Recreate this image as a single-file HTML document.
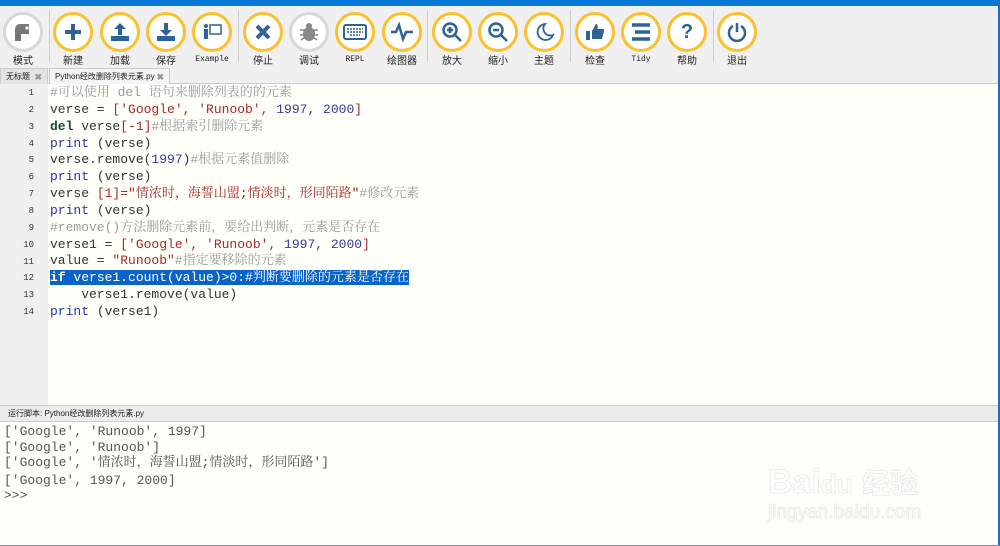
<!DOCTYPE html>
<html><head><meta charset="utf-8"><style>
*{margin:0;padding:0;box-sizing:border-box}
body{width:1000px;height:546px;overflow:hidden;background:#f0f0f0;position:relative;font-family:"Liberation Sans","Noto Sans CJK SC",sans-serif}
.top{position:absolute;left:0;top:0;width:1000px;height:6px;background:#0a78d7}
.rb{position:absolute;right:0;top:0;width:2px;height:546px;background:#1a6fc4}
.btn{position:absolute;top:12px;width:40px;height:40px;border-radius:50%;border:3px solid #fbc02d;background:#fff;display:flex;align-items:center;justify-content:center}
.btn.g{border-color:#d8d8d8}
.lbl{position:absolute;top:52px;width:60px;text-align:center;font-size:10px;color:#222;font-family:"Liberation Sans","Noto Sans CJK SC",sans-serif}
.lbl.m{font-family:"Liberation Mono",monospace;font-size:8px;top:55px}
.sep{position:absolute;top:10px;width:1px;height:52px;background:#ccc}
.tabs{position:absolute;top:68px;left:0;width:998px;height:16px;border-bottom:1px solid #ccc}
.tab{position:absolute;top:0;height:16px;font-size:8px;line-height:16px;padding-left:5px;border:1px solid #ccc;border-bottom:none;background:#e4e4e4;color:#222}
.tab b{color:#999;position:absolute;right:5px;font-size:9px}
.ed{position:absolute;top:84px;left:0;width:998px;height:321px;background:#fffffa}
.gut{position:absolute;top:84px;left:0;width:48px;height:321px;background:#f0f0f0}
.ln{position:absolute;left:0;width:34px;text-align:right;font-size:9px;color:#333;font-family:"Liberation Mono",monospace}
.code{position:absolute;left:50px;font-family:"Liberation Mono","Noto Serif CJK SC",monospace;font-size:13px;color:#333;white-space:pre}
.code div{height:16.85px;line-height:16.85px}
.k{color:#2838a8}.s{color:#a82a2a}.n{color:#3a3a9a}.c{color:#9a9a9a}.d{color:#1b4a3c;font-weight:bold}
.sel{background:#0a64c8;color:#fff}
.run{position:absolute;top:405px;left:0;width:998px;height:17px;background:#ececec;border-top:1px solid #ccc;border-bottom:1px solid #ccc;font-size:8px;line-height:15px;padding-left:8px;color:#222}
.out{position:absolute;top:422px;left:0;width:998px;height:123px;background:#fffffa}
.o{position:absolute;left:4px;font-family:"Liberation Mono","Noto Serif CJK SC",monospace;font-size:13px;color:#555;white-space:pre;height:16px;line-height:16px}
.bb{position:absolute;left:0;bottom:0;width:1000px;height:1px;background:#888}
svg{display:block}
</style></head><body>
<div class="top"></div>
<div class="btn g" style="left:3px"><svg width="22" height="22" viewBox="0 0 22 22"><path d="M3 20V8a5 5 0 0 1 5-5h9v10H9v7z" fill="#777"/><circle cx="15" cy="7" r="1.6" fill="#fff"/></svg></div>
<div class="btn" style="left:53px"><svg width="20" height="20" viewBox="0 0 20 20"><path d="M10 2v16M2 10h16" stroke="#2e6395" stroke-width="4"/></svg></div>
<div class="btn" style="left:100px"><svg width="22" height="22" viewBox="0 0 22 22"><path d="M11 2l-6 6h4v6h4V8h4z" fill="#2e6395"/><rect x="2" y="15" width="18" height="5" fill="#2e6395"/></svg></div>
<div class="btn" style="left:146px"><svg width="22" height="22" viewBox="0 0 22 22"><path d="M11 15l-6-6h4V2h4v7h4z" fill="#2e6395"/><rect x="2" y="15" width="18" height="5" fill="#2e6395"/></svg></div>
<div class="btn" style="left:192px"><svg width="22" height="22" viewBox="0 0 22 22"><rect x="9" y="4" width="11" height="9" fill="none" stroke="#2e6395" stroke-width="1.5"/><circle cx="5" cy="5" r="2" fill="#2e6395"/><rect x="3" y="8" width="4" height="10" fill="#2e6395"/></svg></div>
<div class="btn" style="left:243px"><svg width="18" height="18" viewBox="0 0 18 18"><path d="M3 3l12 12M15 3L3 15" stroke="#2e6395" stroke-width="4"/></svg></div>
<div class="btn g" style="left:289px"><svg width="22" height="22" viewBox="0 0 22 22"><ellipse cx="11" cy="13" rx="6" ry="7" fill="#888"/><circle cx="11" cy="5" r="3" fill="#888"/><path d="M2 9h18M2 14h18M3 19l4-3M19 19l-4-3" stroke="#888" stroke-width="1.5"/></svg></div>
<div class="btn" style="left:335px"><svg width="24" height="16" viewBox="0 0 24 16"><rect x="1" y="1" width="22" height="14" rx="2" fill="none" stroke="#2e6395" stroke-width="2"/><path d="M4 5h16M4 8h16M7 11h10" stroke="#2e6395" stroke-width="1.5" stroke-dasharray="2 1"/></svg></div>
<div class="btn" style="left:382px"><svg width="24" height="20" viewBox="0 0 24 20"><path d="M1 10h5l3-7 4 14 3-7h7" fill="none" stroke="#2e6395" stroke-width="2.5"/></svg></div>
<div class="btn" style="left:432px"><svg width="22" height="22" viewBox="0 0 22 22"><circle cx="9" cy="9" r="6.5" fill="none" stroke="#2e6395" stroke-width="2.5"/><path d="M14 14l6 6M9 6v6M6 9h6" stroke="#2e6395" stroke-width="2.5"/></svg></div>
<div class="btn" style="left:478px"><svg width="22" height="22" viewBox="0 0 22 22"><circle cx="9" cy="9" r="6.5" fill="none" stroke="#2e6395" stroke-width="2.5"/><path d="M14 14l6 6M6 9h6" stroke="#2e6395" stroke-width="2.5"/></svg></div>
<div class="btn" style="left:524px"><svg width="22" height="22" viewBox="0 0 22 22"><path d="M12 3a8 8 0 1 0 8 11A7 7 0 0 1 12 3z" fill="none" stroke="#2e6395" stroke-width="1.8"/></svg></div>
<div class="btn" style="left:575px"><svg width="22" height="22" viewBox="0 0 22 22"><rect x="2" y="10" width="4" height="9" fill="#2e6395"/><path d="M8 10l4-7c2 0 2 2 1.5 5H19c1 0 1.5 1 1 2l-2 8H8z" fill="#2e6395"/></svg></div>
<div class="btn" style="left:621px"><svg width="22" height="20" viewBox="0 0 22 20"><path d="M2 3h18M5 10h15M2 17h18" stroke="#2e6395" stroke-width="3.5"/></svg></div>
<div class="btn" style="left:667px"><span style="font:bold 20px 'Liberation Sans';color:#2e6395">?</span></div>
<div class="btn" style="left:717px"><svg width="22" height="22" viewBox="0 0 22 22"><path d="M7 5a8 8 0 1 0 8 0" fill="none" stroke="#2e6395" stroke-width="2.5"/><path d="M11 2v9" stroke="#2e6395" stroke-width="2.5"/></svg></div>
<div class="sep" style="left:49px"></div><div class="sep" style="left:238px"></div><div class="sep" style="left:427px"></div><div class="sep" style="left:570px"></div><div class="sep" style="left:713px"></div>
<div class="lbl" style="left:-7px">模式</div><div class="lbl" style="left:43px">新建</div><div class="lbl" style="left:90px">加载</div><div class="lbl" style="left:136px">保存</div><div class="lbl m" style="left:182px">Example</div><div class="lbl" style="left:233px">停止</div><div class="lbl" style="left:279px">调试</div><div class="lbl m" style="left:325px">REPL</div><div class="lbl" style="left:372px">绘图器</div><div class="lbl" style="left:422px">放大</div><div class="lbl" style="left:468px">缩小</div><div class="lbl" style="left:514px">主题</div><div class="lbl" style="left:565px">检查</div><div class="lbl m" style="left:611px">Tidy</div><div class="lbl" style="left:657px">帮助</div><div class="lbl" style="left:707px">退出</div>
<div class="tabs">
<div class="tab" style="left:0;width:48px">无标题<b>✖</b></div>
<div class="tab" style="left:49px;width:121px;background:#f4f4f4">Python经改删除列表元素.py<b>✖</b></div>
</div>
<div class="ed"></div><div class="gut"></div>
<div class="ln" style="top:88px">1</div><div class="ln" style="top:105px">2</div><div class="ln" style="top:122px">3</div><div class="ln" style="top:139px">4</div><div class="ln" style="top:155px">5</div><div class="ln" style="top:172px">6</div><div class="ln" style="top:189px">7</div><div class="ln" style="top:206px">8</div><div class="ln" style="top:223px">9</div><div class="ln" style="top:240px">10</div><div class="ln" style="top:257px">11</div><div class="ln" style="top:273px">12</div><div class="ln" style="top:290px">13</div><div class="ln" style="top:307px">14</div>
<div class="code" style="top:85px"><div><span class="c">#可以使用 del 语句来删除列表的的元素</span></div><div>verse = <span class="s">['Google', 'Runoob', </span><span class="n">1997, 2000</span><span class="s">]</span></div><div><span class="d">del</span> verse<span class="s">[-1]</span><span class="c">#根据索引删除元素</span></div><div><span class="k">print</span> (verse)</div><div>verse.remove(<span class="n">1997</span>)<span class="c">#根据元素值删除</span></div><div><span class="k">print</span> (verse)</div><div>verse <span class="s">[1]="情浓时，海誓山盟;情淡时，形同陌路"</span><span class="c">#修改元素</span></div><div><span class="k">print</span> (verse)</div><div><span class="c">#remove()方法删除元素前，要给出判断，元素是否存在</span></div><div>verse1 = <span class="s">['Google', 'Runoob', </span><span class="n">1997, 2000</span><span class="s">]</span></div><div>value = <span class="s">"Runoob"</span><span class="c">#指定要移除的元素</span></div><div><span class="sel"><b>if</b> verse1.count(value)>0:#判断要删除的元素是否存在</span></div><div>    verse1.remove(value)</div><div><span class="k">print</span> (verse1)</div></div>
<div class="run">运行脚本: Python经改删除列表元素.py</div>
<div class="out"></div>
<div class="o" style="top:424px">['Google', 'Runoob', 1997]</div>
<div class="o" style="top:440px">['Google', 'Runoob']</div>
<div class="o" style="top:455px">['Google', '情浓时，海誓山盟;情淡时，形同陌路']</div>
<div class="o" style="top:473px">['Google', 1997, 2000]</div>
<div class="o" style="top:488px">&gt;&gt;&gt;</div>
<div style="position:absolute;left:768px;top:462px;font:bold 34px 'Liberation Sans',sans-serif;color:#fff;-webkit-text-stroke:1px #ebebe6">Bai<span style="font-size:26px">du</span> <span style="font-family:'Noto Sans CJK SC',sans-serif;font-size:28px">经验</span></div>
<div style="position:absolute;left:768px;top:502px;font:19px 'Liberation Sans',sans-serif;color:#fff;-webkit-text-stroke:1px #ebebe6">jingyan.baidu.com</div>
<div class="rb"></div><div class="bb"></div>
</body></html>
